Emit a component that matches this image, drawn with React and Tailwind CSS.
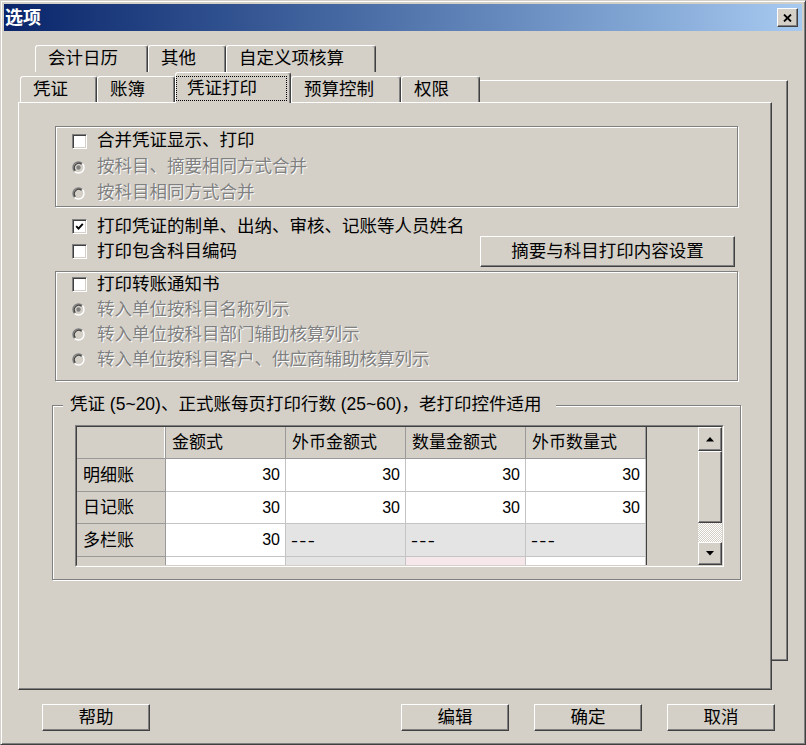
import React from "react";

const FONT = "font-['Liberation_Sans','Noto_Sans_CJK_SC',sans-serif]";
const raised =
  "border border-t-white border-l-white border-r-[#404040] border-b-[#404040] shadow-[inset_-1px_-1px_0_#808080]";
const etched = "border border-[#808080] shadow-[inset_1px_1px_0_#fff,1px_1px_0_#fff]";
const disabledText = "text-[#808080] [text-shadow:1px_1px_0_#fff]";

const CheckBox = ({ checked }) => (
  <span className="flex w-[15px] h-[15px] shrink-0 items-center justify-center bg-white border border-t-[#808080] border-l-[#808080] border-r-white border-b-white shadow-[inset_1px_1px_0_#404040,inset_-1px_-1px_0_#d4d0c8]">
    {checked && (
      <svg width="9" height="9" viewBox="0 0 9 9">
        <polyline points="1.2,4.2 3.5,6.6 7.8,1.8" fill="none" stroke="#000" strokeWidth="1.9" />
      </svg>
    )}
  </span>
);

const Radio = ({ dot }) => (
  <svg width="13" height="13" viewBox="0 0 13 13" className="shrink-0">
    <circle cx="6.5" cy="6.5" r="5.5" fill="#d4d0c8" />
    <path d="M10.4 2.6 A5.5 5.5 0 0 0 2.6 10.4" fill="none" stroke="#808080" strokeWidth="1.4" />
    <path d="M2.6 10.4 A5.5 5.5 0 0 0 10.4 2.6" fill="none" stroke="#fff" strokeWidth="1.4" />
    <path d="M9.6 3.4 A4.4 4.4 0 0 0 3.4 9.6" fill="none" stroke="#404040" strokeWidth="1.2" />
    {dot && <circle cx="6.5" cy="6.5" r="2.2" fill="#808080" />}
  </svg>
);

const Tab = ({ label, className }) => (
  <div
    className={`relative flex items-center pl-3 bg-[#d4d0c8] border-l border-t border-r border-l-white border-t-white border-r-[#404040] shadow-[inset_-1px_0_0_#808080] rounded-t-[3px] ${className}`}
  >
    {label}
  </div>
);

const Arrow = ({ down }) => (
  <svg width="8" height="5" viewBox="0 0 8 5">
    <polygon points={down ? "0,0 8,0 4,4.5" : "0,4.5 8,4.5 4,0"} fill="#000" />
  </svg>
);

const cols = ["金额式", "外币金额式", "数量金额式", "外币数量式"];
const rows = [
  { name: "明细账", vals: ["30", "30", "30", "30"], h: "h-[33px]" },
  { name: "日记账", vals: ["30", "30", "30", "30"], h: "h-[32px]" },
  { name: "多栏账", vals: ["30", null, null, null], h: "h-[33px]" },
];

export default function App() {
  return (
    <div
      className={`w-[806px] h-[745px] bg-[#d4d0c8] ${FONT} text-[17.5px] leading-none text-black border border-t-[#d4d0c8] border-l-[#d4d0c8] border-r-[#404040] border-b-[#404040] shadow-[inset_1px_1px_0_#fff,inset_-1px_-1px_0_#808080] p-[3px] flex flex-col overflow-hidden`}
    >
      {/* title bar */}
      <div className="h-[27px] shrink-0 flex items-center justify-between pl-[1px] pr-[4px] bg-linear-to-r from-[#0a246a] to-[#a6caf0]">
        <span className="text-white font-bold text-[18px]">选项</span>
        <div className={`${raised} w-[21px] h-[19px] bg-[#d4d0c8] flex items-center justify-center`}>
          <svg width="9" height="8" viewBox="0 0 9 8">
            <path d="M1 0.5 L8 7.5 M8 0.5 L1 7.5" stroke="#000" strokeWidth="1.8" />
          </svg>
        </div>
      </div>

      {/* tabs + page */}
      <div className="relative mt-[14px] ml-[14px] w-[770px] h-[645px] shrink-0 flex flex-col">
        <div className="absolute left-[20px] right-0 top-[35px] h-[581px] border-t border-r border-b border-t-white border-r-[#404040] border-b-[#404040] shadow-[inset_-1px_-1px_0_#808080]" />

        <div className="relative flex items-end h-[27px] ml-[17px]">
          <Tab className="w-[113px] h-[27px]" label="会计日历" />
          <Tab className="w-[78px] h-[27px]" label="其他" />
          <Tab className="w-[150px] h-[27px]" label="自定义项核算" />
        </div>

        <div className="relative flex items-end h-[30px] ml-[2px]">
          <Tab className="w-[77px] h-[26px]" label="凭证" />
          <Tab className="w-[78px] h-[26px]" label="账簿" />
          <div className="relative z-10 w-[116px] h-[31px] -mb-[1px] flex items-center bg-[#d4d0c8] border-l border-t border-r border-l-white border-t-white border-r-[#404040] shadow-[inset_-1px_0_0_#808080] rounded-t-[3px] pr-[3px] pt-[1px]">
            <div className="flex-1 h-[25px] flex items-center pl-[10px] border border-dotted border-black">凭证打印</div>
          </div>
          <Tab className="w-[110px] h-[26px]" label="预算控制" />
          <Tab className="w-[79px] h-[26px]" label="权限" />
        </div>

        <div className="relative w-[754px] h-[588px] bg-[#d4d0c8] border border-t-white border-l-white border-r-[#404040] border-b-[#404040] shadow-[inset_-1px_-1px_0_#808080] pl-[36px] pt-[23px] flex flex-col">
          {/* group 1 */}
          <div className={`${etched} w-[683px] h-[81px] pt-[1px] pl-[16px] flex flex-col`}>
            <div className="h-[26px] flex items-center">
              <CheckBox />
              <span className="ml-[10px]">合并凭证显示、打印</span>
            </div>
            <div className="h-[26px] flex items-center">
              <Radio dot />
              <span className={`ml-[12px] ${disabledText}`}>按科目、摘要相同方式合并</span>
            </div>
            <div className="h-[26px] flex items-center">
              <Radio />
              <span className={`ml-[12px] ${disabledText}`}>按科目相同方式合并</span>
            </div>
          </div>

          {/* loose options */}
          <div className="mt-[7px] w-[683px] h-[53px] flex justify-between">
            <div className="flex flex-col pl-[17px]">
              <div className="h-[25px] flex items-center">
                <CheckBox checked />
                <span className="ml-[10px]">打印凭证的制单、出纳、审核、记账等人员姓名</span>
              </div>
              <div className="h-[25px] flex items-center">
                <CheckBox />
                <span className="ml-[10px]">打印包含科目编码</span>
              </div>
            </div>
            <div className={`${raised} mt-[22px] mr-[3px] w-[255px] h-[31px] bg-[#d4d0c8] flex items-center justify-center`}>
              摘要与科目打印内容设置
            </div>
          </div>

          {/* group 2 */}
          <div className={`${etched} mt-[4px] w-[683px] h-[110px] pl-[16px] flex flex-col`}>
            <div className="h-[25px] flex items-center">
              <CheckBox />
              <span className="ml-[10px]">打印转账通知书</span>
            </div>
            <div className="h-[25px] flex items-center">
              <Radio dot />
              <span className={`ml-[12px] ${disabledText}`}>转入单位按科目名称列示</span>
            </div>
            <div className="h-[25px] flex items-center">
              <Radio />
              <span className={`ml-[12px] ${disabledText}`}>转入单位按科目部门辅助核算列示</span>
            </div>
            <div className="h-[25px] flex items-center">
              <Radio />
              <span className={`ml-[12px] ${disabledText}`}>转入单位按科目客户、供应商辅助核算列示</span>
            </div>
          </div>

          {/* group 3 */}
          <div className={`${etched} relative mt-[24px] -ml-[3px] w-[689px] h-[175px] pl-[22px] pt-[19px]`}>
            <div className="absolute left-[10px] top-[-11px] h-[20px] flex items-center bg-[#d4d0c8] pl-[7px] pr-[14px]">
              凭证 (5~20)、正式账每页打印行数 (25~60)，老打印控件适用
            </div>

            <div className="w-[649px] h-[142px] border border-t-[#808080] border-l-[#808080] border-r-white border-b-white">
              <div className="w-full h-full border border-t-[#404040] border-l-[#404040] border-r-[#d4d0c8] border-b-[#d4d0c8] flex overflow-hidden">
                <div className="w-[570px] h-full border-r border-[#404040] flex flex-col overflow-hidden">
                  <div className="grid grid-cols-[89px_repeat(4,120px)] h-[32px] shrink-0">
                    <div className="bg-[#d4d0c8] border-r border-b border-[#9a9a9a] shadow-[inset_-1px_0_0_#fff]" />
                    {cols.map((c) => (
                      <div key={c} className="bg-[#d4d0c8] border-r border-b border-[#9a9a9a] flex items-center pl-[6px] text-[17px]">
                        {c}
                      </div>
                    ))}
                  </div>
                  {rows.map((r) => (
                    <div key={r.name} className={`grid grid-cols-[89px_repeat(4,120px)] ${r.h} shrink-0`}>
                      <div className="bg-[#d4d0c8] border-r border-b border-[#9a9a9a] flex items-center pl-[6px] text-[17px]">
                        {r.name}
                      </div>
                      {r.vals.map((v, i) =>
                        v ? (
                          <div key={i} className="bg-white border-r border-b border-[#c4c4c4] flex items-center justify-end pr-[5px] text-[16px]">
                            {v}
                          </div>
                        ) : (
                          <div key={i} className="bg-[#e4e4e4] border-r border-b border-[#c4c4c4] flex items-center pl-[5px] text-[17px]">
                            <span className="inline-block tracking-[1px] scale-x-125 origin-left">---</span>
                          </div>
                        )
                      )}
                    </div>
                  ))}
                  <div className="grid grid-cols-[89px_repeat(4,120px)] h-[33px] shrink-0">
                    <div className="bg-[#d4d0c8] border-r border-[#9a9a9a]" />
                    <div className="bg-white border-r border-[#c4c4c4]" />
                    <div className="bg-[#e4e4e4] border-r border-[#c4c4c4]" />
                    <div className="bg-[#f6e8ea] border-r border-[#c4c4c4]" />
                    <div className="bg-white border-r border-[#c4c4c4]" />
                  </div>
                </div>
                <div className="flex-1 bg-[#d4d0c8]" />
                <div className="w-[24px] h-full flex flex-col">
                  <div className={`${raised} h-[24px] bg-[#d4d0c8] flex items-center justify-center`}>
                    <Arrow />
                  </div>
                  <div className={`${raised} h-[72px] bg-[#d4d0c8]`} />
                  <div className="h-[19px] bg-[image:repeating-conic-gradient(#fff_0%_25%,#d4d0c8_0%_50%)] bg-[length:2px_2px]" />
                  <div className={`${raised} h-[23px] bg-[#d4d0c8] flex items-center justify-center`}>
                    <Arrow down />
                  </div>
                </div>
              </div>
            </div>
          </div>
        </div>
      </div>

      {/* buttons */}
      <div className="mt-[14px] h-[27px] flex shrink-0">
        <div className={`${raised} ml-[38px] w-[108px] h-[27px] bg-[#d4d0c8] flex items-center justify-center`}>帮助</div>
        <div className="ml-auto mr-[27px] flex gap-[25px]">
          <div className={`${raised} w-[108px] h-[27px] bg-[#d4d0c8] flex items-center justify-center`}>编辑</div>
          <div className={`${raised} w-[108px] h-[27px] bg-[#d4d0c8] flex items-center justify-center`}>确定</div>
          <div className={`${raised} w-[108px] h-[27px] bg-[#d4d0c8] flex items-center justify-center`}>取消</div>
        </div>
      </div>
    </div>
  );
}
